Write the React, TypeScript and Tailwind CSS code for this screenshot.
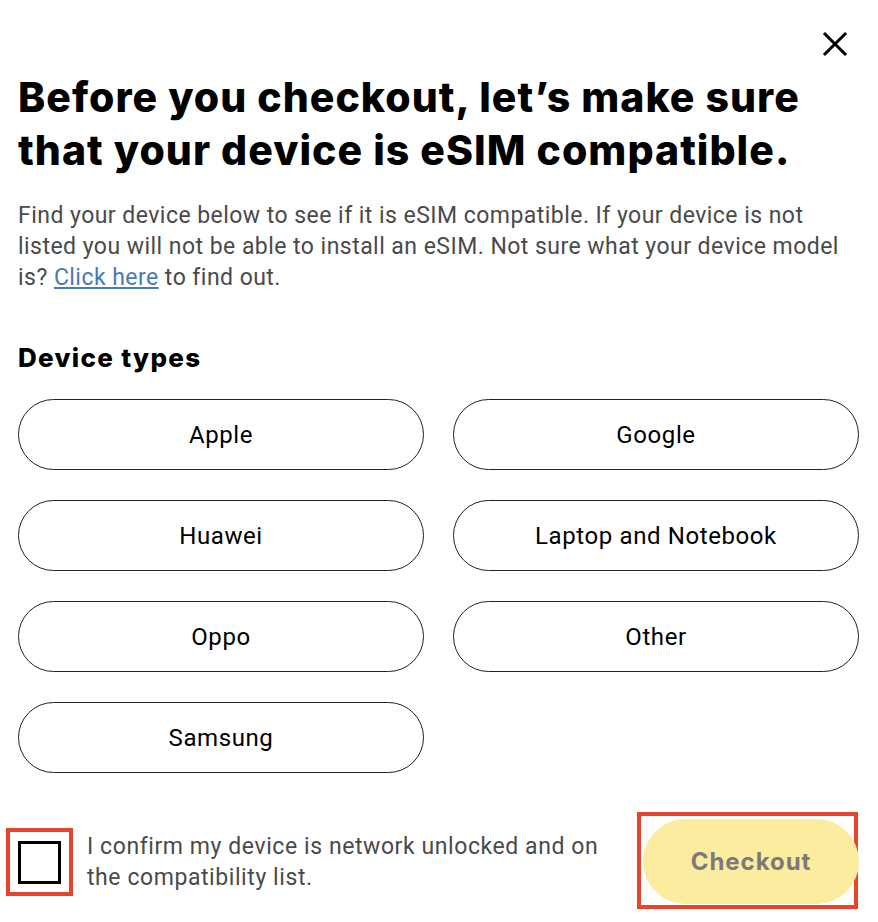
import React from "react";

const devices = ["Apple", "Google", "Huawei", "Laptop and Notebook", "Oppo", "Other", "Samsung"];

export default function App() {
  return (
    <div className="relative w-[878px] h-[922px] bg-white overflow-hidden" style={{ fontFamily: "Roboto, 'Liberation Sans', sans-serif" }}>
      <button className="absolute top-[31px] right-[30px] w-[26px] h-[26px] flex items-center justify-center" aria-label="Close">
        <svg width="26" height="26" viewBox="0 0 26 26" fill="none" stroke="#000" strokeWidth="3" strokeLinecap="square">
          <path d="M3 3 L23 23 M23 3 L3 23" />
        </svg>
      </button>
      <div className="pl-[18px] pr-[20px] pt-[71px]">
        <h1 className="w-[830px] text-[41px] leading-[53px] font-extrabold tracking-[0.025em] text-black" style={{ fontFamily: "Inter, 'Liberation Sans', sans-serif" }}>
          Before you checkout, let’s make sure that your device is eSIM compatible.
        </h1>
        <p className="mt-[23px] w-[845px] text-[23px] leading-[31px] tracking-[0.02em] text-[#4a4a4a]">
          Find your device below to see if it is eSIM compatible. If your device is not listed you will not be able to install an eSIM. Not sure what your device model is?{" "}
          <a href="#" className="text-[#4a7ab5] underline">Click here</a> to find out.
        </p>
        <h2 className="mt-[49px] text-[26px] leading-[32px] font-extrabold tracking-[0.05em] text-black" style={{ fontFamily: "Inter, 'Liberation Sans', sans-serif" }}>
          Device types
        </h2>
        <div className="mt-[25px] grid grid-cols-2 gap-x-[29px] gap-y-[30px] w-[841px]">
          {devices.map((d) => (
            <button key={d} className="h-[71px] rounded-full border border-[#222] bg-white text-[24px] tracking-[0.025em] text-black">
              {d}
            </button>
          ))}
        </div>
      </div>
      <div className="flex items-center pl-[6px] pr-[20px] mt-[42px]">
        <div className="w-[67px] h-[68px] border-[4px] border-[#e8442b] flex items-center justify-center shrink-0">
          <div className="w-[43px] h-[43px] border-[3px] border-black bg-white" />
        </div>
        <p className="ml-[14px] w-[530px] text-[23px] leading-[31px] tracking-[0.025em] text-[#4a4a4a]">
          I confirm my device is network unlocked and on the compatibility list.
        </p>
        <div className="ml-auto w-[221px] h-[97px] border-[4px] border-[#e8442b] relative -mt-[3px]">
          <div className="absolute left-[2px] top-[3px] w-[216px] h-[85px] rounded-full bg-[#fcec9f] flex items-center justify-center">
            <span className="text-[24px] font-bold tracking-[0.04em] text-[#7a7a7a]" style={{ fontFamily: "Inter, 'Liberation Sans', sans-serif" }}>Checkout</span>
          </div>
        </div>
      </div>
    </div>
  );
}
